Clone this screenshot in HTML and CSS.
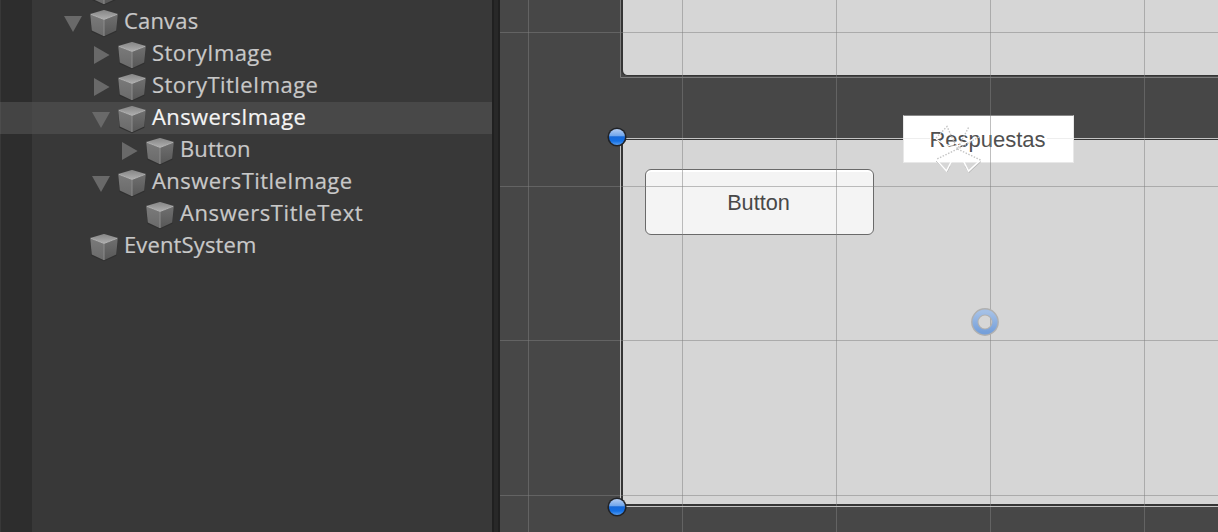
FILE: index.html
```
<!DOCTYPE html>
<html lang="en">
<head>
<meta charset="utf-8">
<title>Hierarchy and Scene</title>
<link rel="stylesheet" href="styles.css">
</head>
<body>
<svg class="defs" width="0" height="0" aria-hidden="true">
  <defs>
    <linearGradient id="cube-top" x1="0" y1="0" x2="0" y2="1"><stop offset="0" stop-color="#858585"/><stop offset="1" stop-color="#aeaeae"/></linearGradient>
    <linearGradient id="cube-left" x1="0" y1="0" x2="0" y2="1"><stop offset="0" stop-color="#7a7a7a"/><stop offset="1" stop-color="#6a6a6a"/></linearGradient>
    <linearGradient id="cube-right" x1="0" y1="0" x2="0" y2="1"><stop offset="0" stop-color="#707070"/><stop offset="1" stop-color="#575757"/></linearGradient>
    <linearGradient id="knob" x1="0" y1="0" x2="0" y2="1"><stop offset="0" stop-color="#b4cdf2"/><stop offset=".44" stop-color="#6ea5ec"/><stop offset=".48" stop-color="#1668d8"/><stop offset=".75" stop-color="#1470e4"/><stop offset="1" stop-color="#559cf0"/></linearGradient>
    <linearGradient id="ring" x1="0" y1="0" x2="0" y2="1"><stop offset="0" stop-color="#a4c0e6"/><stop offset="1" stop-color="#76a0da"/></linearGradient>
    <symbol id="cube" viewBox="0 0 28 28">
      <path d="M14 .8 27.7 4.3 26.4 21.8 14 27.2 1.4 21.8.2 4.3Z" fill="#303030"/>
      <path d="M.2 4.2 14 9.7V26.2L1.8 20.600Z" fill="url(#cube-left)"/>
      <path d="M27.8 4.2 14 9.7V26.2L26.2 20.600Z" fill="url(#cube-right)"/>
      <path d="M14 -.1 27.8 4 14 9.500.2 4Z" fill="url(#cube-top)"/>
      <path d="M.8 4.3 14 9.500 27.2 4.3" fill="none" stroke="#b8b8b8" stroke-width=".9"/>
      <path d="M14 10V26" stroke="#909090" stroke-width=".9"/>
    </symbol>
    <symbol id="open" viewBox="0 0 18 18"><path d="M0 0H18L9 16Z" fill="#696969"/></symbol>
    <symbol id="closed" viewBox="0 0 18 18"><path d="M2 0 17.6 9 2 18Z" fill="#696969"/></symbol>
  </defs>
</svg>
<main class="editor">
  <section class="hierarchy">
    <div class="row level-1"><span class="arrow"></span><svg class="cube"><use href="#cube"/></svg></div>
    <div class="row level-1"><svg class="arrow is-open"><use href="#open"/></svg><svg class="cube"><use href="#cube"/></svg><span class="label canvas">Canvas</span></div>
    <div class="row level-2"><svg class="arrow"><use href="#closed"/></svg><svg class="cube"><use href="#cube"/></svg><span class="label story">StoryImage</span></div>
    <div class="row level-2"><svg class="arrow"><use href="#closed"/></svg><svg class="cube"><use href="#cube"/></svg><span class="label story-title">StoryTitleImage</span></div>
    <div class="row level-2 selected"><svg class="arrow is-open"><use href="#open"/></svg><svg class="cube"><use href="#cube"/></svg><span class="label answers">AnswersImage</span></div>
    <div class="row level-3"><svg class="arrow"><use href="#closed"/></svg><svg class="cube"><use href="#cube"/></svg><span class="label button">Button</span></div>
    <div class="row level-2"><svg class="arrow is-open"><use href="#open"/></svg><svg class="cube"><use href="#cube"/></svg><span class="label answers-title">AnswersTitleImage</span></div>
    <div class="row level-3"><span class="arrow"></span><svg class="cube"><use href="#cube"/></svg><span class="label answers-text">AnswersTitleText</span></div>
    <div class="row level-1"><span class="arrow"></span><svg class="cube"><use href="#cube"/></svg><span class="label events">EventSystem</span></div>
  </section>
  <div class="splitter"></div>
  <section class="scene">
    <div class="panel story-panel"></div>
    <div class="panel answers-panel"></div>
    <div class="scene-button"><span>Button</span></div>
    <div class="scene-title"><span>Respuestas</span></div>
    <svg class="overlay" viewBox="500 0 718 532">
      <g class="grid">
        <path d="M528.5 0V532M682.5 0V532M836.5 0V532M990.5 0V532M1144.5 0V532M500 32.5H1218M500 186.5H1218M500 340.5H1218M500 495.5H1218"/>
      </g>
      <path class="rect-outline" d="M620.5 0V77.5H1218"/>
      <path class="rect-selected" d="M903 138.5H620.5V506.5H1218M1074 138.5H1218"/>
      <path class="over-title" d="M903 138.5H930M1047 138.5H1074"/>
      <g class="gizmo-shade">
        <path d="M936 161 947 172 950 166M981 161.5 969 172.5 965 166"/>
      </g>
      <g class="gizmo">
        <path d="M936 159.5 946.5 171 957.5 149M980.5 160 968.5 171 957.5 149M936 139 Q947 147 957.5 146.5L976 138"/>
        <path class="dotted-dark" d="M957.5 149 936 159.5M957.5 149 980.5 160M936 138 947 126.5 957.5 149M968.5 127.5 957.5 149M979 137 958 149"/>
      </g>
      <g class="knob"><circle cx="617" cy="137" r="9.6"/><circle cx="617" cy="137" r="8" fill="url(#knob)"/></g>
      <g class="knob"><circle cx="617" cy="507" r="9.6"/><circle cx="617" cy="507" r="8" fill="url(#knob)"/></g>
      <circle cx="985" cy="322" r="10.2" class="pivot-edge"/>
      <circle cx="985" cy="322" r="10" class="pivot"/>
    </svg>
  </section>
</main>
</body>
</html>
```
FILE: styles.css
```
* { box-sizing: border-box; }
body { margin: 0; overflow: hidden; background: #383838; }
.defs { position: absolute; }
.editor { display: flex; width: 1218px; height: 532px; overflow: hidden; }

.hierarchy {
  width: 492px;
  height: 532px;
  overflow: hidden;
  background: linear-gradient(90deg, #383838 0 1px, #2d2d2d 1px 32px, #383838 32px);
}
.row { display: flex; height: 32px; padding-top: 4px; }
.row:first-child { margin-top: -26px; }
.level-1 { padding-left: 64px; }
.level-2 { padding-left: 92px; }
.level-3 { padding-left: 120px; }
.selected { background: linear-gradient(90deg, #4c4c4c 0 1px, #444 1px 32px, #484848 32px); }
.arrow { width: 18px; height: 18px; margin: 4px 8px 0 0; flex: none; }
.is-open { margin-top: 6px; }
.cube { width: 28px; height: 28px; margin-right: 6px; flex: none; overflow: visible; }
.label {
  font: 22px/30px "Open Sans", "Noto Sans", sans-serif;
  margin-top: -5px;
  color: #c8c8c8;
  -webkit-text-stroke: 0.2px;
  white-space: nowrap;
}
.selected .label { color: #f4f4f4; }
.canvas { letter-spacing: 0.17px; }
.story { letter-spacing: 0.43px; }
.story-title { letter-spacing: 0.45px; }
.answers { letter-spacing: 0.37px; }
.button { letter-spacing: 0.1px; }
.answers-title { letter-spacing: 0.43px; }
.answers-text { letter-spacing: 0.58px; }
.events { letter-spacing: 0.14px; }

.splitter { width: 8px; background: linear-gradient(90deg, #202020 0 2px, #282828 2px 6px, #202020 6px); }

/* Free canvas: objects sit at their scene coordinates. */
.scene { position: relative; width: 718px; height: 532px; overflow: hidden; background: #474747; }
.panel { position: absolute; left: 121px; width: 620px; background: #d6d6d6; border: 2px solid #353535; }
.story-panel { top: -20px; height: 96px; border-bottom-width: 1px; border-radius: 0 0 0 6px; }
.answers-panel { top: 139px; height: 367px; border-width: 1px 0 2px 2px; }
.scene-button {
  position: absolute;
  left: 145px;
  top: 169px;
  width: 229px;
  height: 66px;
  display: grid;
  place-items: center;
  border: 1px solid #6a6a6a;
  border-radius: 6px;
  background: #f4f4f4;
  box-shadow: inset 0 2px #fff;
  font: 21.7px/26px "Liberation Sans", Arial, sans-serif;
  color: #484848;
}
.scene-button span { margin: 1px 2px 0 0; }
.scene-title {
  position: absolute;
  left: 403px;
  top: 115px;
  width: 171px;
  height: 48px;
  display: grid;
  place-items: center;
  background: #fff;
  border: 1px solid #e8e8e8;
  border-top-color: #888;
  font: 22px/26px "Liberation Sans", Arial, sans-serif;
  color: #505050;
}
.scene-title span { margin: 1px 2px 0 0; }
.overlay { position: absolute; inset: 0; width: 718px; height: 532px; fill: none; }
.grid { stroke: #808080; stroke-opacity: 0.5; }
.rect-outline { stroke: #7c7c7c; }
.rect-selected { stroke: #c4c4c4; }
.over-title { stroke: #eee; }
.gizmo { stroke: #fff; stroke-width: 1.4; }
.gizmo-shade { stroke: #bbb; }
.dotted-dark { stroke: #c4c4c4; stroke-dasharray: 1.5 1.5; }
.knob circle:first-child { fill: #202226; }
.pivot-edge { stroke: #b0b0b0; stroke-width: 7.4; }
.pivot { stroke: url(#ring); stroke-width: 5; }
```
